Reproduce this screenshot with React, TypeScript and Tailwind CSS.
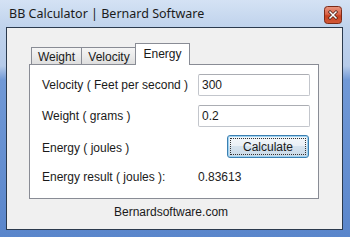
export default function App() {
  return (
    <div className="w-[350px] h-[237px] flex flex-col bg-[linear-gradient(to_bottom,#d4e2f4_0px,#c0d3ec_27px,#b6cbe9_66px,#7199d6_80px,#5a86cb_237px)] font-['Liberation_Sans',Arial,sans-serif] text-[12px] text-[#1a1a1a]">
      <div className="h-[27px] flex items-start shrink-0">
        <div className="pl-[9px] pt-[6px] leading-[16px] font-['Noto_Sans',sans-serif] text-[12.5px] text-[#1b1b1b]">
          BB Calculator | Bernard Software
        </div>
        <svg className="ml-auto mr-[8px] mt-[6px] shrink-0" width="18" height="18" viewBox="0 0 18 18">
          <defs>
            <linearGradient id="cg" x1="0" y1="0" x2="0" y2="1">
              <stop offset="0" stopColor="#e99680" />
              <stop offset="0.45" stopColor="#d9644a" />
              <stop offset="0.55" stopColor="#c8401f" />
              <stop offset="1" stopColor="#d25a38" />
            </linearGradient>
          </defs>
          <rect x="0.5" y="0.5" width="17" height="17" rx="3" fill="url(#cg)" stroke="#7a2a18" />
          <path d="M6 6 L12 12 M12 6 L6 12" stroke="#4a1f18" strokeWidth="3" strokeLinecap="square" />
          <path d="M6 6 L12 12 M12 6 L6 12" stroke="#ffffff" strokeWidth="1.5" strokeLinecap="square" />
        </svg>
      </div>
      <div className="ml-[6px] w-[337px] h-[203px] border border-[#2b3a4d] bg-[#f0f0f0] flex flex-col pl-[22px] pt-[15px]">
        <div className="w-[290px] flex flex-col">
          <div className="h-[21px] flex items-end pl-[2px] relative z-10">
            <div className="w-[51px] h-[17px] border border-b-0 border-[#898c95] bg-[linear-gradient(to_bottom,#f5f5f5_0%,#ebebeb_50%,#dedede_100%)] flex items-center justify-center leading-[14px] pt-[1px]">
              Weight
            </div>
            <div className="w-[55px] h-[17px] border border-b-0 border-l-0 border-[#898c95] bg-[linear-gradient(to_bottom,#f5f5f5_0%,#ebebeb_50%,#dedede_100%)] flex items-center justify-center leading-[14px] pt-[1px]">
              Velocity
            </div>
            <div className="ml-[-2px] w-[55px] h-[22px] mb-[-1px] border border-b-0 border-[#898c95] bg-white flex items-center justify-center leading-[14px] pb-[2px]">
              Energy
            </div>
          </div>
          <div className="h-[135px] border border-[#898c95] bg-white flex flex-col pl-[12px] pt-[9px]">
            <div className="h-[22px] flex items-center">
              <div className="w-[156px] leading-[14px]">Velocity ( Feet per second )</div>
              <div className="w-[112px] h-[22px] border border-[#c3c6cc] border-t-[#abadb3] rounded-[2px] bg-white flex items-center pl-[3px] leading-[14px]">
                300
              </div>
            </div>
            <div className="h-[22px] mt-[9px] flex items-center">
              <div className="w-[156px] leading-[14px]">Weight ( grams )</div>
              <div className="w-[112px] h-[22px] border border-[#c3c6cc] border-t-[#abadb3] rounded-[2px] bg-white flex items-center pl-[3px] leading-[14px]">
                0.2
              </div>
            </div>
            <div className="h-[23px] mt-[8px] flex items-center">
              <div className="w-[185px] leading-[14px] pt-[3px]">Energy ( joules )</div>
              <button className="relative w-[82px] h-[23px] rounded-[3px] border border-[#3c7fb1] bg-[linear-gradient(to_bottom,#f4f8fb_0%,#e9eff5_50%,#d6e3ee_50%,#c9d9e7_100%)] shadow-[inset_0_0_0_1px_#9fd3f1] flex items-center justify-center leading-[14px] text-[#1a1a1a]">
                Calculate
                <span className="absolute inset-[2px] border border-dotted border-[#333]"></span>
              </button>
            </div>
            <div className="h-[14px] mt-[12px] flex items-center">
              <div className="w-[156px] leading-[14px]">Energy result ( joules ):</div>
              <div className="leading-[14px] text-[#222]">0.83613</div>
            </div>
          </div>
        </div>
        <div className="pt-[6px] pl-[85px] leading-[14px]">Bernardsoftware.com</div>
      </div>
    </div>
  );
}
